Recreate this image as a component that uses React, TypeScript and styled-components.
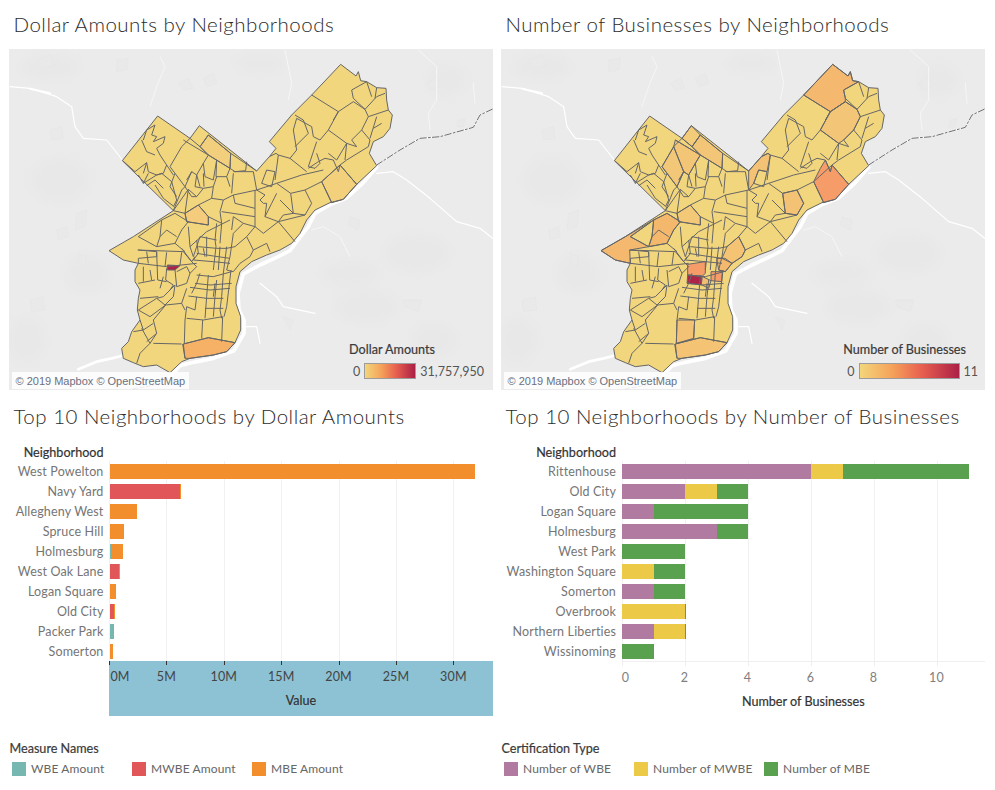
import React from "react";
import styled, { createGlobalStyle } from "styled-components";

const GlobalStyle = createGlobalStyle`
  html, body { margin: 0; padding: 0; background: #fff; }
  body { font-family: "Lato", "Open Sans", sans-serif; }
`;

const Page = styled.div`
  width: 995px;
  height: 790px;
  padding-left: 9px;
  box-sizing: border-box;
  display: grid;
  grid-template-columns: 484px 484px;
  column-gap: 8px;
  overflow: hidden;
`;
const Pane = styled.section`
  display: flex;
  flex-direction: column;
`;
const Title = styled.h2<{ $h: number }>`
  margin: 0;
  height: ${(p) => p.$h}px;
  padding: 0 0 2px 4.5px;
  box-sizing: border-box;
  display: flex;
  align-items: center;
  font: 300 20.5px "Lato", sans-serif;
  color: #2c2c2c;
  letter-spacing: 0.5px;
  white-space: nowrap;
`;
const MapBox = styled.div`
  position: relative;
  width: 484px;
  height: 341px;
  background: #ebebeb;
  overflow: hidden;
`;
const MapSvg = styled.svg`
  display: block;
  width: 484px;
  height: 341px;
`;
const Attribution = styled.div`
  position: absolute;
  left: 3px;
  bottom: 1px;
  height: 17px;
  padding: 0 3.5px;
  display: flex;
  align-items: center;
  background: rgba(255, 255, 255, 0.85);
  font: 11px "Liberation Sans", sans-serif;
  color: #6a7080;
  white-space: nowrap;
`;
const ColorLegend = styled.div<{ $right: number }>`
  position: absolute;
  right: ${(p) => p.$right}px;
  bottom: 11px;
  display: flex;
  flex-direction: column;
`;
const ColorLegendTitle = styled.div`
  font: 400 12.6px "Lato", sans-serif;
  -webkit-text-stroke: 0.2px currentColor;
  color: #3a3a3a;
  margin-bottom: 6px;
  height: 15px;
  line-height: 15px;
  white-space: nowrap;
`;
const ColorLegendRow = styled.div`
  padding-left: 4px;
  display: flex;
  align-items: center;
  gap: 4px;
  font: 12.5px "Lato", sans-serif;
  color: #555;
  white-space: nowrap;
`;
const Ramp = styled.div<{ $w: number }>`
  width: ${(p) => p.$w}px;
  height: 16px;
  box-sizing: border-box;
  border: 1px solid #9c9c9c;
  background: linear-gradient(90deg, #f3d67c 0%, #f5a35a 32%, #e8604f 62%, #ac1f46 100%);
`;
const ChartHead = styled.div<{ $label: number }>`
  height: 17px;
  width: ${(p) => p.$label}px;
  padding-right: 5.5px;
  box-sizing: border-box;
  text-align: right;
  font: 400 12.6px/17px "Lato", sans-serif;
  -webkit-text-stroke: 0.2px currentColor;
  color: #333;
  white-space: nowrap;
`;
const ChartBody = styled.div<{ $label: number }>`
  display: grid;
  grid-template-columns: ${(p) => p.$label}px 1fr;
`;
const Labels = styled.div`
  display: flex;
  flex-direction: column;
`;
const RowLabel = styled.div`
  height: 20px;
  padding-right: 5.5px;
  text-align: right;
  font: 12.5px/22px "Lato", sans-serif;
  color: #757575;
  letter-spacing: 0.15px;
  white-space: nowrap;
`;
const Plot = styled.div`
  position: relative;
  height: 200px;
`;
const GridLine = styled.div<{ $x: number }>`
  position: absolute;
  top: 0;
  bottom: 0;
  left: ${(p) => p.$x}px;
  width: 1px;
  background: #f1f1f1;
`;
const BarRow = styled.div`
  position: relative;
  height: 20px;
  padding: 3px 0 2px 0.5px;
  box-sizing: border-box;
  display: flex;
`;
const Segment = styled.div<{ $color: string; $w: number }>`
  height: 15px;
  width: ${(p) => p.$w}px;
  background: ${(p) => p.$color};
  flex: none;
`;
const Axis = styled.div<{ $label: number; $band?: boolean }>`
  margin-left: ${(p) => p.$label}px;
  height: 55px;
  display: flex;
  flex-direction: column;
  background: ${(p) => (p.$band ? "#8cc2d4" : "transparent")};
  border-top: ${(p) => (p.$band ? "none" : "1px solid #efefef")};
  box-sizing: border-box;
`;
const TickTrack = styled.div`
  position: relative;
  height: 31px;
  flex: none;
`;
const Tick = styled.div<{ $x: number; $c: string }>`
  position: absolute;
  top: 0;
  left: ${(p) => p.$x}px;
  width: 1px;
  height: 4px;
  background: ${(p) => p.$c};
`;
const TickLabel = styled.div<{ $x: number; $c: string }>`
  position: absolute;
  top: 7px;
  left: ${(p) => p.$x}px;
  transform: translateX(-50%);
  font: 12.5px/18px "Lato", sans-serif;
  color: ${(p) => p.$c};
  letter-spacing: 0.15px;
  white-space: nowrap;
`;
const AxisTitle = styled.div`
  text-align: center;
  font: 400 12.6px/17px "Lato", sans-serif;
  -webkit-text-stroke: 0.2px currentColor;
  color: #333;
`;
const Legend = styled.div`
  margin-top: 24px;
  display: flex;
  flex-direction: column;
`;
const LegendTitle = styled.div`
  height: 17px;
  padding-left: 0.5px;
  font: 400 12.6px/17px "Lato", sans-serif;
  -webkit-text-stroke: 0.2px currentColor;
  color: #3a3a3a;
`;
const LegendRow = styled.div<{ $cell: number }>`
  margin-top: 4px;
  padding-left: 3px;
  display: grid;
  grid-template-columns: repeat(3, ${(p) => p.$cell}px);
`;
const LegendItem = styled.div`
  display: flex;
  align-items: center;
  gap: 5px;
  font: 12px/16px "Lato", sans-serif;
  color: #666;
  letter-spacing: 0.12px;
  white-space: nowrap;
`;
const Swatch = styled.span<{ $color: string }>`
  width: 14px;
  height: 14px;
  flex: none;
  background: ${(p) => p.$color};
`;

/* ---------- map geometry (drawn in a 3x coordinate space) ---------- */
const CITY =
  "1022,73 1068,108 1075,95 1082,122 1100,125 1130,143 1158,145 1160,180 1165,210 1177,225 1170,265 1150,290 1120,305 1108,340 1130,377 1070,433 1030,478 990,488 945,510 920,540 900,580 875,610 840,630 800,645 755,665 720,695 708,740 708,790 722,830 722,870 705,908 680,935 640,945 570,955 545,965 510,998 470,975 430,980 400,968 370,955 365,925 385,905 395,875 420,840 412,810 415,775 420,750 405,725 405,690 415,670 370,660 327,632 400,590 520,512 367,362 473,228 570,295 598,257 770,393 808,350 828,325 808,305 875,225 935,165";

const LINES = [
  "430,300 440,270 465,255 455,285 470,290 460,305 495,290 490,310 470,325 480,345 500,375 520,405",
  "425,300 440,335 465,345",
  "570,295 545,320 510,380 525,400 555,440 575,395 590,405 610,370 625,345 550,300",
  "625,285 600,320 570,295", "600,320 625,345 690,385 692,340 625,285",
  "692,340 770,393", "740,365 737,392 705,395 690,385", "650,360 648,410 680,410 690,385",
  "368,362 405,395 440,368 445,395 470,405 490,400", "415,405 430,430 445,400",
  "430,430 470,405 485,400 515,425 530,480 520,500", "440,437 465,420 490,445", "465,435 490,475 520,498",
  "555,440 545,450 520,512", "520,512 565,448 590,470 610,445 640,440 650,410",
  "555,520 595,495 625,530 625,555 560,545 555,520", "595,495 635,475 670,480 660,515 665,550 625,530", "635,475 640,440",
  "590,405 585,440 610,445", "610,400 612,440",
  "555,520 520,512", "670,480 700,465 770,450 830,430 905,405 970,390",
  "700,465 705,490 765,505 765,450", "665,515 765,530 765,505", "700,400 695,460", "700,395 760,395 770,450",
  "770,450 795,465 780,480 790,490 800,490 795,530 835,545 850,525 880,520 872,460 830,430",
  "830,460 815,490 795,530", "880,520 915,525 935,490 915,450 872,460", "915,450 965,425 995,488",
  "965,425 1020,375 1070,433", "765,530 765,560 790,580 835,545 885,605", "835,545 915,525",
  "700,530 695,570", "690,540 620,575 570,620 580,650 600,590", "650,550 645,600 648,620 640,690",
  "665,550 660,610", "680,620 670,700 665,770 660,810 665,835", "700,580 690,650 680,690 700,695 720,670",
  "600,590 650,600", "595,620 650,625 680,625 705,620", "590,640 640,648 690,655", "580,660 640,665 690,670",
  "590,705 640,710 695,695", "585,730 630,735 695,730", "570,742 630,750 690,745", "565,768 620,775 670,775",
  "615,805 670,805", "560,835 610,840 668,830", "625,705 620,770 615,835", "600,700 590,730 575,760",
  "650,720 645,770 640,830", "590,770 585,810 560,800", "560,800 555,840 553,910", "608,840 605,895", "668,830 665,905",
  "550,912 625,893 705,908", "548,912 555,955", "693,690 680,800 672,830",
  "415,630 470,635 470,650 415,655 415,670", "413,630 550,635 575,665 585,650",
  "415,670 500,680 590,670", "470,635 473,720 500,725", "500,685 497,720 520,735 510,750",
  "525,690 530,740 560,730 570,700 560,680 530,695", "525,735 490,770 470,775 415,810", "415,730 465,720",
  "420,775 475,770", "525,735 520,770 495,795 470,775", "560,745 545,790 555,810",
  "497,795 460,840 470,880 450,910 420,940 410,970", "420,840 430,870 460,850", "400,875 430,870",
  "460,910 545,912", "415,590 470,620 480,590 485,540 525,520", "415,590 485,540",
  "525,520 565,545 545,570 525,610 555,635", "470,620 525,610", "565,560 570,620", "545,625 575,665 590,680 570,700",
  "700,580 730,550 765,560", "730,550 700,530", "705,620 740,590 760,630 750,650 720,670",
  "760,630 800,610 810,635", "740,590 765,560", "808,350 828,340 835,345 870,355 920,395",
  "870,355 890,330 880,270 890,235 935,260 940,290 960,300", "835,345 825,420", "785,430 800,390 825,395 815,440 785,430",
  "885,225 910,240 925,280 885,320", "950,305 925,380 945,385 960,370 950,340", "960,300 985,270 1040,310 1010,360 985,340",
  "925,385 955,365 975,355 1000,360 1015,395 1020,375 1040,360 1105,320", "1040,310 1035,360", "1055,300 1070,320 1040,310",
  "985,270 1015,215 935,165", "1105,230 1085,270 1110,300 1105,320", "1130,230 1110,295", "1145,250 1120,265",
  "1055,300 1085,270", "1095,208 1060,185 1015,215", "1055,150 1100,125", "1055,150 1060,175 1095,208 1130,170 1155,160",
  "1095,208 1105,230 1165,210", "1100,125 1115,170",
  "440,368 430,400", "490,400 500,375", "525,400 510,440 530,470", "555,440 575,470 590,470", "575,395 560,420",
  "590,405 600,440", "610,370 615,410 640,420 650,360", "680,410 690,440", "565,448 555,520",
  "480,590 500,570 530,590", "440,635 445,670", "500,637 495,680", "545,637 540,675", "430,680 430,725",
  "590,600 595,640 580,660", "620,590 620,650", "610,625 615,650", "450,910 425,865", "415,810 450,830 497,795",
  "545,790 497,795", "470,880 440,905", "840,480 880,520", "1130,143 1125,175", "1000,240 1015,215",
  "490,710 480,745", "450,690 455,720", "660,620 655,690", "645,730 640,770",
];

const MAP_A: [string, string][] = [
  ["625,285 692,340 690,385 625,345 600,320", "#f2cf7d"],
  ["555,520 595,495 625,530 625,555 560,545", "#f5cc7c"],
  ["965,425 1020,375 1070,433 1030,478 995,488", "#f3d07c"],
  ["550,912 625,893 705,908 680,935 640,945 570,955 555,955", "#f6b167"],
  ["502,675 540,677 525,690 502,690", "#ae2449"],
];
const MAP_B: [string, string][] = [
  ["1022,73 1068,108 1075,95 1082,122 1100,125 1055,150 1060,175 1060,185 1015,215 935,165", "#f4b96e"],
  ["1060,185 1095,208 1105,230 1085,270 1055,300 1040,310 985,270 1015,215", "#f3c577"],
  ["965,425 985,385 1000,360 1015,395 1020,375 1070,433 1030,478 995,488", "#f59c69"],
  ["872,460 915,450 935,490 915,525 880,520", "#f3c274"],
  ["625,285 692,340 690,385 625,345 600,320", "#f3c677"],
  ["598,257 625,285 600,320 570,295", "#f3cc7a"],
  ["550,300 625,345 610,370 590,405 575,395 545,320", "#f3c677"],
  ["545,320 575,395 555,440 525,400 510,380", "#f2c878"],
  ["327,632 400,590 485,540 415,590 470,620 413,630 415,670 370,660", "#f4b96e"],
  ["470,620 480,590 485,540 525,520 565,545 545,570 525,610", "#f4b86d"],
  ["555,520 595,495 625,530 625,555 560,545", "#f3c978"],
  ["587,705 630,709 628,734 585,730", "#ae2449"],
  ["587,673 640,665 640,700 630,709 587,705", "#f59c69"],
  ["657,695 691,695 689,725 657,722", "#f59c69"],
  ["630,709 657,722 650,745 628,734", "#f4be72"],
  ["674,655 699,655 720,670 700,695 680,690", "#f4b96e"],
  ["550,912 625,893 705,908 680,935 640,945 570,955 555,955", "#f4c474"],
  ["555,840 608,840 605,895 553,910", "#f3c274"],
  ["705,620 740,590 760,630 750,650 720,670 690,655", "#f4c474"],
  ["770,393 808,350 828,340 835,345 825,395 800,390 785,430 770,450", "#f3c274"],
];

const BRIGHT_WATER = [
  "30,140 90,145 170,170 215,200 225,260 250,295 320,300 367,360",
  "1130,400 1180,395 1220,420 1290,475 1370,545 1440,565 1478,595",
  "780,730 830,770 850,800 945,820",
  "730,860 770,860 780,910",
  "1478,207 1440,225 1420,262 1320,290 1260,295 1200,330 1130,375",
];
const FAINT_WATER = [
  "935,570 970,560 1020,590 1050,650",
  "1255,30 1310,80 1310,180 1285,220 1290,270",
  "855,30 875,130 865,180",
  "480,50 495,80 470,140 450,200",
  "1420,130 1425,190",
];
const PARCELS = [
  "110,60 150,45 165,75 125,85", "350,60 385,55 380,90 350,95", "535,130 565,115 580,145 550,150", "610,115 640,100 650,130 620,140",
  "150,270 185,260 190,295 155,300", "230,520 260,510 255,560 225,570", "170,570 200,560 205,590 175,600", "235,640 260,650 255,680 235,665",
  "1050,530 1080,540 1075,570 1045,555", "1210,780 1265,780 1255,815 1215,800", "850,830 880,840 870,870",
  "1375,240 1395,235 1390,260 1370,260", "1280,130 1310,110 1320,140 1290,150", "90,780 130,770 135,810 95,815",
];
const BLOTCHES = [
  [150, 80, 90, 40], [780, 70, 80, 30], [1340, 120, 60, 50], [180, 420, 90, 70], [260, 700, 70, 60],
  [1250, 640, 100, 60], [1100, 800, 100, 50], [1300, 900, 70, 50], [80, 900, 60, 70], [1050, 700, 90, 40],
];

const PhillyMap: React.FC<{ regions: [string, string][] }> = ({ regions }) => (
  <MapSvg viewBox="27 27 1452 1023" aria-hidden="true">
    <defs>
      <filter id="soft" x="-30%" y="-30%" width="160%" height="160%">
        <feGaussianBlur stdDeviation="16" />
      </filter>
    </defs>
    <g fill="#e8e8e8" filter="url(#soft)">
      {BLOTCHES.map(([cx, cy, rx, ry], i) => (
        <ellipse key={i} cx={cx} cy={cy} rx={rx} ry={ry} />
      ))}
    </g>
    <g fill="#e9e9e9" stroke="#e5e5e5" strokeWidth="2">
      {PARCELS.map((pts) => (
        <polygon key={pts} points={pts} />
      ))}
    </g>
    <g fill="none" stroke="#f6f6f6" strokeLinejoin="round" strokeLinecap="round">
      {FAINT_WATER.map((pts) => (
        <polyline key={pts} points={pts} strokeWidth="3" />
      ))}
    </g>
    <g fill="none" stroke="#fff" strokeLinejoin="round" strokeLinecap="round">
      {BRIGHT_WATER.map((pts) => (
        <polyline key={pts} points={pts} strokeWidth="3.6" />
      ))}
      <polyline
        points="1130,382 1090,428 1040,474 990,494 945,520 925,560 900,592 870,632 830,652 780,675 730,702 714,760 717,810 732,840 732,880 702,932 640,955 580,967 540,977 510,1010"
        strokeWidth="11"
      />
      <polyline points="235,988 290,965 335,955 375,945" strokeWidth="8" />
      <polyline points="90,146 150,160" strokeWidth="6" />
    </g>
    <polyline
      points="1478,207 1440,225 1420,262 1320,290 1260,295 1200,330 1130,375"
      fill="none"
      stroke="#555"
      strokeWidth="2.6"
      strokeDasharray="22 4 8 4"
    />
    <polyline points="400,1046 440,1040 480,1030" fill="none" stroke="#555" strokeWidth="2.4" strokeDasharray="14 5" />
    <polygon points={CITY} fill="#f2d67e" />
    {regions.map(([pts, fill]) => (
      <polygon key={pts} points={pts} fill={fill} />
    ))}
    <g fill="none" stroke="#666" strokeWidth="3" strokeLinejoin="round">
      {LINES.map((pts) => (
        <polyline key={pts} points={pts} />
      ))}
      {regions.map(([pts]) => (
        <polygon key={pts} points={pts} />
      ))}
      <polygon points={CITY} />
    </g>
  </MapSvg>
);

const ORANGE = "#f28e2b";
const RED = "#e15759";
const TEAL = "#76b7b2";
const PURPLE = "#b07aa1";
const YELLOW = "#edc948";
const GREEN = "#59a14f";

type Row = { name: string; segs: [string, number][] };

const DOLLARS: Row[] = [
  { name: "West Powelton", segs: [[ORANGE, 365]] },
  { name: "Navy Yard", segs: [[RED, 70], [ORANGE, 1]] },
  { name: "Allegheny West", segs: [[ORANGE, 27]] },
  { name: "Spruce Hill", segs: [[ORANGE, 14]] },
  { name: "Holmesburg", segs: [[TEAL, 1], [ORANGE, 12]] },
  { name: "West Oak Lane", segs: [[RED, 9], [ORANGE, 1]] },
  { name: "Logan Square", segs: [[ORANGE, 6]] },
  { name: "Old City", segs: [[RED, 4], [ORANGE, 1]] },
  { name: "Packer Park", segs: [[TEAL, 3], [ORANGE, 1]] },
  { name: "Somerton", segs: [[ORANGE, 3]] },
];

const U = 31.5;
const COUNTS: Row[] = [
  { name: "Rittenhouse", segs: [[PURPLE, 6 * U], [YELLOW, U], [GREEN, 4 * U]] },
  { name: "Old City", segs: [[PURPLE, 2 * U], [YELLOW, U], [GREEN, U]] },
  { name: "Logan Square", segs: [[PURPLE, U], [GREEN, 3 * U]] },
  { name: "Holmesburg", segs: [[PURPLE, 3 * U], [GREEN, U]] },
  { name: "West Park", segs: [[GREEN, 2 * U]] },
  { name: "Washington Square", segs: [[YELLOW, U], [GREEN, U]] },
  { name: "Somerton", segs: [[PURPLE, U], [GREEN, U]] },
  { name: "Overbrook", segs: [[YELLOW, 2 * U], [GREEN, 1]] },
  { name: "Northern Liberties", segs: [[PURPLE, U], [YELLOW, U], [GREEN, 1]] },
  { name: "Wissinoming", segs: [[GREEN, U]] },
];

type TickDef = { x: number; label: string; labelX?: number };
const DOLLAR_TICKS: TickDef[] = ["0M", "5M", "10M", "15M", "20M", "25M", "30M"].map((label, i) => ({
  x: i * 57.4,
  label,
  labelX: i === 0 ? 11 : i * 57.4,
}));
const COUNT_TICKS: TickDef[] = ["0", "2", "4", "6", "8", "10"].map((label, i) => ({
  x: i * 2 * U,
  label,
  labelX: i === 0 ? 4 : i * 2 * U,
}));

const BarChart: React.FC<{
  labelWidth: number;
  rows: Row[];
  ticks: TickDef[];
  axisTitle: string;
  band?: boolean;
}> = ({ labelWidth, rows, ticks, axisTitle, band }) => (
  <>
    <ChartHead $label={labelWidth}>Neighborhood</ChartHead>
    <ChartBody $label={labelWidth}>
      <Labels>
        {rows.map((r) => (
          <RowLabel key={r.name}>{r.name}</RowLabel>
        ))}
      </Labels>
      <Plot>
        {ticks.map((t) => (
          <GridLine key={t.label} $x={t.x} />
        ))}
        {rows.map((r) => (
          <BarRow key={r.name}>
            {r.segs.map(([c, w], i) => (
              <Segment key={i} $color={c} $w={w} />
            ))}
          </BarRow>
        ))}
      </Plot>
    </ChartBody>
    <Axis $label={labelWidth} $band={band}>
      <TickTrack>
        {ticks.map((t) => (
          <React.Fragment key={t.label}>
            <Tick $x={t.x} $c={band ? "#333" : "#efefef"} />
            <TickLabel $x={t.labelX ?? t.x} $c={band ? "#444" : "#808080"}>
              {t.label}
            </TickLabel>
          </React.Fragment>
        ))}
      </TickTrack>
      <AxisTitle>{axisTitle}</AxisTitle>
    </Axis>
  </>
);

const CategoryLegend: React.FC<{ title: string; cell: number; items: [string, string][] }> = ({
  title,
  cell,
  items,
}) => (
  <Legend>
    <LegendTitle>{title}</LegendTitle>
    <LegendRow $cell={cell}>
      {items.map(([c, name]) => (
        <LegendItem key={name}>
          <Swatch $color={c} />
          {name}
        </LegendItem>
      ))}
    </LegendRow>
  </Legend>
);

export default function App() {
  return (
    <>
      <GlobalStyle />
      <Page>
        <Pane>
          <Title $h={49}>Dollar Amounts by Neighborhoods</Title>
          <MapBox>
            <PhillyMap regions={MAP_A} />
            <Attribution>© 2019 Mapbox © OpenStreetMap</Attribution>
            <ColorLegend $right={9}>
              <ColorLegendTitle>Dollar Amounts</ColorLegendTitle>
              <ColorLegendRow>
                <span>0</span>
                <Ramp $w={52} />
                <span>31,757,950</span>
              </ColorLegendRow>
            </ColorLegend>
          </MapBox>
          <Title $h={54}>Top 10 Neighborhoods by Dollar Amounts</Title>
          <BarChart labelWidth={100} rows={DOLLARS} ticks={DOLLAR_TICKS} axisTitle="Value" band />
          <CategoryLegend
            title="Measure Names"
            cell={120}
            items={[
              [TEAL, "WBE Amount"],
              [RED, "MWBE Amount"],
              [ORANGE, "MBE Amount"],
            ]}
          />
        </Pane>
        <Pane>
          <Title $h={49}>Number of Businesses by Neighborhoods</Title>
          <MapBox>
            <PhillyMap regions={MAP_B} />
            <Attribution>© 2019 Mapbox © OpenStreetMap</Attribution>
            <ColorLegend $right={7}>
              <ColorLegendTitle>Number of Businesses</ColorLegendTitle>
              <ColorLegendRow>
                <span>0</span>
                <Ramp $w={101} />
                <span>11</span>
              </ColorLegendRow>
            </ColorLegend>
          </MapBox>
          <Title $h={54}>Top 10 Neighborhoods by Number of Businesses</Title>
          <BarChart labelWidth={120.5} rows={COUNTS} ticks={COUNT_TICKS} axisTitle="Number of Businesses" />
          <CategoryLegend
            title="Certification Type"
            cell={130}
            items={[
              [PURPLE, "Number of WBE"],
              [YELLOW, "Number of MWBE"],
              [GREEN, "Number of MBE"],
            ]}
          />
        </Pane>
      </Page>
    </>
  );
}
